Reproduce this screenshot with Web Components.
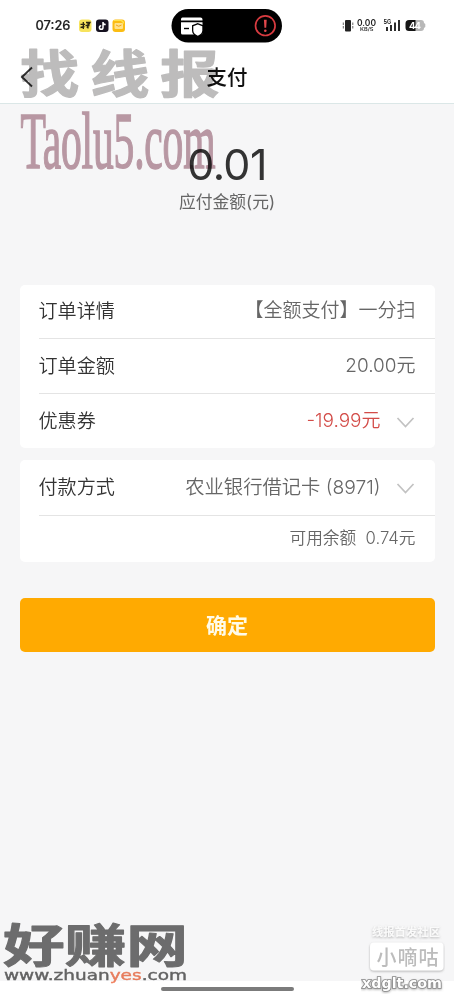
<!DOCTYPE html>
<html lang="zh-CN">
<head>
<meta charset="utf-8">
<title>支付</title>
<style>
html,body{margin:0;height:100%}
body{background:#f6f6f7;font-family:Inter,"Noto Sans CJK SC",sans-serif;overflow:hidden}
</style>
</head>
<body>
<pay-page></pay-page>
<script>
const define=(name,html)=>customElements.define(name,class extends HTMLElement{
  constructor(){super();const t=document.createElement('template');t.innerHTML=html;
    this.attachShadow({mode:'open'}).append(t.content.cloneNode(true));}
});

define('status-bar',`<style>
:host{display:flex;height:51px;box-sizing:border-box;background:#fff}
svg{display:block}
</style>
<svg width="454" height="51" viewBox="0 0 454 51" font-family="Inter,sans-serif">
<text x="35.5" y="30" font-size="13" font-weight="500" fill="#222" stroke="#222" stroke-width=".2" textLength="35" lengthAdjust="spacingAndGlyphs">07:26</text>
<rect x="79" y="19.500" width="12.500" height="12.500" rx="3" fill="#f7e35c"/>
<path d="M80.500 24.300h4.500M83.300 22v7M80.500 27.500l4-1M86 22.500h4l-3 5.500M85.500 25.500h4M88 22v6.500" stroke="#2b2613" stroke-width="1.300" fill="none"/>
<rect x="96" y="19.500" width="12.500" height="12.500" rx="3" fill="#15111f"/>
<path d="M103 22v5.500a1.800 1.800 0 1 1-1.800-1.800M103 22.300c.3 1.500 1.400 2.200 2.700 2.300" stroke="#fff" stroke-width="1.500" fill="none"/>
<rect x="112.500" y="19.500" width="12.500" height="12.500" rx="3" fill="#fbbd13"/>
<path d="M113 21h8l3 3v-2l-2-2h-8z" fill="#ffe34c"/>
<rect x="114.500" y="23" width="8.500" height="6" rx="1" fill="#ffe28a"/><path d="M116 25q2.700 2.500 5.500 0" stroke="#f2a51a" fill="none"/>
<rect x="171.500" y="9" width="110.500" height="33.500" rx="16.700" fill="#000"/>
<path d="M182.500 17.500h18a2 2 0 0 1 2 2v1h-21.500v-1.300a1.700 1.700 0 0 1 1.500-1.700z" fill="#fff"/>
<path d="M181 22.300h21.500v10.700a1.500 1.500 0 0 1-1.500 1.500h-18.500a1.500 1.500 0 0 1-1.500-1.500z" fill="#fff"/>
<path d="M184 28.500h5" stroke="#000" stroke-width="1.400"/>
<path d="M197.800 24.500l4.500 1.700v4.300c0 2.500-2 4.200-4.500 5.300-2.500-1.100-4.500-2.800-4.500-5.300v-4.300z" fill="#fff" stroke="#000" stroke-width="2.600" paint-order="stroke"/>
<circle cx="265.300" cy="25.700" r="9.800" fill="none" stroke="#d83b40" stroke-width="1.700"/>
<path d="M263.900 19.800h2.800l-.5 8h-1.800z" fill="#e1474b"/><circle cx="265.300" cy="30.700" r="1.300" fill="#e1474b"/>
<rect x="345" y="20" width="6" height="11.500" rx="1" fill="#222"/>
<path d="M343.300 22.500v6M352.800 22.500v6" stroke="#555" stroke-width=".9" stroke-dasharray="2.500 1"/>
<text x="357" y="26" font-size="8.500" font-weight="600" fill="#222" textLength="19" lengthAdjust="spacingAndGlyphs">0.00</text>
<text x="360" y="31.300" font-size="4.800" font-weight="600" fill="#333" textLength="13.500" lengthAdjust="spacingAndGlyphs">KB/S</text>
<text x="383.500" y="24" font-size="5.500" font-weight="700" fill="#222">5G</text>
<path d="M387 27v4M391 25v6M395 22.500v8.500M399 20v11" stroke="#222" stroke-width="1.900"/>
<path d="M409 20h7v11h-7a3.500 3.500 0 0 1-3.500-3.500v-4a3.500 3.500 0 0 1 3.500-3.500z" fill="#151515"/>
<path d="M415.500 20h5.500a3 3 0 0 1 3 3l1.300 1v3l-1.300 1a3 3 0 0 1-3 3h-5.500z" fill="#b8b8b8"/>
<text x="409" y="29" font-size="9.500" font-weight="700" fill="#fff" textLength="12">44</text>
</svg>`);

define('nav-bar',`<style>
:host{display:grid;grid-template-columns:54px 1fr 54px;align-items:center;height:53px;background:#fff;border-bottom:1px solid #dbe7e7;box-sizing:border-box}
svg{display:block;margin-left:20px}
h1{margin:2px 0 0;text-align:center;font-size:20.500px;line-height:28px;font-weight:500;color:#111}
</style><svg width="14" height="24" viewBox="0 0 14 24"><path d="M12 2.500 2 12l10 9.500" fill="none" stroke="#333" stroke-width="1.900"/></svg><h1><slot></slot></h1>`);

define('amount-due',`<style>
:host{display:flex;flex-direction:column;align-items:center;height:181px;box-sizing:border-box;padding-top:35px}
b{font-weight:400;font-size:43px;line-height:50px;color:#333;letter-spacing:-.6px}
span{font-size:16.800px;line-height:24px;color:#666;margin-top:1px}
</style><b><slot></slot></b><span><slot name="label"></slot></span>`);

define('info-card',`<style>
:host{display:block;margin:0 19.500px;background:#fff;border-radius:5px}
</style><slot></slot>`);

define('info-row',`<style>
:host{display:flex;align-items:center;justify-content:space-between;height:var(--h,54px);margin-left:19px;padding:0 19px 1px 0;box-sizing:border-box;border-bottom:1px solid #e4e4e4;font-size:19.100px;line-height:28px;font-weight:350;color:#333;white-space:pre}
:host([last]){border-bottom:0}
.v{color:var(--value,#666);display:flex;align-items:center;font-size:var(--vs,19px)}
svg{display:none;margin:4px 0 0 15px}
:host([arrow]) svg{display:block}
</style><span><slot name="label"></slot></span><span class="v"><span><slot></slot></span><svg width="20" height="14" viewBox="0 0 20 14"><path d="m1.500 2 8 8.500 8-8.500" fill="none" stroke="#c2c2c2" stroke-width="1.700"/></svg></span>`);

define('confirm-button',`<style>
:host{display:block;margin:36.500px 19.500px 0}
button{all:unset;display:block;width:100%;height:54px;line-height:55px;text-align:center;border-radius:5px;background:#ffaa01;color:#fffbe9;font-size:21px;font-weight:700}
</style><button><slot></slot></button>`);

define('page-marks',`<style>
:host{position:absolute;inset:0;pointer-events:none;mix-blend-mode:multiply}
svg{display:block}
</style><svg width="454" height="999" viewBox="0 0 454 999">
<g font-family="'Noto Sans CJK SC',sans-serif" font-weight="700" fill="#bdbcbc" stroke="#bdbcbc" stroke-width="1.200" stroke-linejoin="round">
<text transform="translate(20 93) scale(1.160 1)" font-size="51" x="0 60.500 121">找线报</text></g>
<text transform="translate(20.500 168) scale(.52 1)" font-family="'Liberation Serif',serif" font-size="80" fill="#bf9da8" stroke="#bf9da8" stroke-width="1.600" textLength="375" lengthAdjust="spacing">Taolu5.com</text>
<text transform="translate(3 961.500) scale(1.340 1)" font-family="'Noto Sans CJK SC',sans-serif" font-weight="700" font-size="46" fill="#707070" stroke="#707070" stroke-width="1" stroke-linejoin="round" textLength="138">好赚网</text>
<text x="4" y="980" font-family="'DejaVu Sans',sans-serif" font-size="14.500" fill="#666" stroke="#666" stroke-width=".4" textLength="183" lengthAdjust="spacingAndGlyphs">www.zhuan<tspan fill="#f0805f" stroke="#f0805f">yes</tspan>.com</text>
</svg>`);

define('corner-mark',`<style>
:host{position:absolute;right:9px;top:924px;display:flex;flex-direction:column;align-items:center;width:84px;font-family:"Noto Sans CJK SC",sans-serif}
svg{display:block}
</style><svg width="84" height="70" viewBox="361 924 84 70">
<defs><filter id="s" x="-20%" y="-30%" width="140%" height="170%"><feDropShadow dx="0" dy="1" stdDeviation="1" flood-color="#777" flood-opacity=".55"/></filter></defs>
<text x="372" y="935.500" font-size="11" font-weight="700" fill="#fafafa" filter="url(#s)" textLength="68">线报首发社区</text>
<rect x="370" y="942.500" width="73.500" height="28" rx="4" fill="#fff" filter="url(#s)"/>
<text x="376.500" y="964.500" font-size="20" font-weight="500" fill="#bcbcbc" textLength="62">小嘀咕</text>
<text x="362" y="988" font-family="'DejaVu Sans',sans-serif" font-weight="700" font-size="13.500" fill="#fff" stroke="#888" stroke-width="1.600" paint-order="stroke" filter="url(#s)" textLength="80" lengthAdjust="spacingAndGlyphs">xdglt.com</text>
</svg>`);

define('home-bar',`<style>
:host{display:flex;justify-content:center;height:18px;background:#fff;margin-top:auto}
i{width:133px;height:4px;border-radius:2px;background:#7b7b7b;margin-top:6px}
</style><i></i>`);

define('pay-page',`<style>
:host{display:flex;flex-direction:column;position:relative;width:454px;height:999px;overflow:hidden;isolation:isolate;background:#f6f6f7}
.order{margin-bottom:12px}
</style>
<status-bar></status-bar><nav-bar>支付</nav-bar>
<amount-due>0.01<span slot="label">应付金额(元)</span></amount-due>
<info-card class="order">
<info-row><span slot="label">订单详情</span>【全额支付】一分扫</info-row>
<info-row style="--h:55px"><span slot="label">订单金额</span>20.00元</info-row>
<info-row last arrow style="--value:#d34c48"><span slot="label">优惠券</span>-19.99元</info-row>
</info-card>
<info-card>
<info-row arrow style="--h:56px;--vs:19.300px"><span slot="label">付款方式</span>农业银行借记卡 (8971)</info-row>
<info-row last style="--h:45.500px;--vs:16.700px">可用余额  0.74元</info-row>
</info-card>
<confirm-button>确定</confirm-button>
<home-bar></home-bar>
<page-marks></page-marks>
<corner-mark></corner-mark>`);
</script>
</body>
</html>
